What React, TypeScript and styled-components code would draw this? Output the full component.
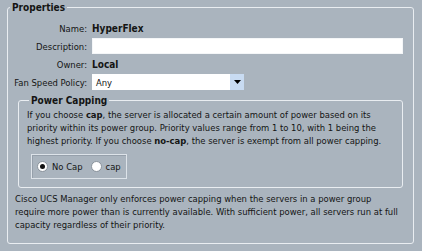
import React, { useState } from "react";
import styled, { createGlobalStyle } from "styled-components";

const GlobalStyle = createGlobalStyle`
  html, body {
    margin: 0;
    padding: 0;
    background: #aab4be;
  }
  body {
    font-family: "DejaVu Sans Condensed", "DejaVu Sans", sans-serif;
    font-size: 9.4px;
    color: #141414;
  }
`;

const Page = styled.div`
  width: 422px;
  height: 251px;
  box-sizing: border-box;
  padding: 2px 8px 0 7px;
`;

const Panel = styled.fieldset<{ $inner?: boolean }>`
  margin: ${p => (p.$inner ? "5px 10px 0 10px" : "0")};
  padding: ${p => (p.$inner ? "2px 8px 8px 8px" : "7px 0 0 0")};
  border: 1.5px solid #e9edf1;
  border-radius: 3px;
  height: ${p => (p.$inner ? "auto" : "242px")};
  box-sizing: border-box;
  min-width: 0;
`;

const Legend = styled.legend`
  font-weight: bold;
  font-size: 10px;
  padding: 0 2px;
  margin-left: 2px;
  line-height: 11px;
`;

const Form = styled.div`
  display: grid;
  grid-template-columns: 79px 1fr;
  grid-auto-rows: 16px;
  column-gap: 5px;
  row-gap: 2px;
  align-items: center;
`;

const Label = styled.span`
  text-align: right;
  white-space: nowrap;
`;

const Value = styled.span`
  font-weight: bold;
  font-size: 10px;
`;

const TextBox = styled.input`
  width: 311px;
  height: 16px;
  box-sizing: border-box;
  border: 1px solid #f4f6f8;
  background: #fff;
  padding: 0 3px;
  font: inherit;
  outline: none;
`;

const Select = styled.div`
  width: 152px;
  height: 16px;
  display: flex;
  align-items: center;
  background: #fff;
  box-sizing: border-box;
`;

const SelectText = styled.span`
  flex: 1;
  padding-left: 4px;
`;

const Arrow = styled.span`
  width: 14px;
  height: 16px;
  background: #c8dbf2;
  display: flex;
  align-items: center;
  justify-content: center;
`;

const Para = styled.p`
  margin: 0;
  line-height: 13px;
  white-space: pre-line;
`;

const RadioBox = styled.div`
  display: inline-flex;
  align-items: center;
  gap: 8px;
  margin: 7px 0 0 4px;
  padding: 4px 5px;
  height: 25px;
  box-sizing: border-box;
  border: 1px solid #dde3e9;
  box-shadow: inset 1px 1px 0 #96a0ab;
`;

const RadioLabel = styled.label`
  display: flex;
  align-items: center;
  gap: 4px;
  cursor: pointer;
`;

const Dot = styled.span<{ $on: boolean }>`
  width: 11px;
  height: 11px;
  border-radius: 50%;
  background: #fff;
  border: 1px solid #8a939c;
  box-sizing: border-box;
  display: flex;
  align-items: center;
  justify-content: center;
  &::after {
    content: "";
    width: 5px;
    height: 5px;
    border-radius: 50%;
    background: ${p => (p.$on ? "#111" : "transparent")};
  }
`;

const Footer = styled(Para)`
  margin-top: 4px;
  padding-left: 7px;
`;

export default function App() {
  const [choice, setChoice] = useState("nocap");
  return (
    <Page>
      <GlobalStyle />
      <Panel>
        <Legend>Properties</Legend>
        <Form>
          <Label>Name:</Label>
          <Value>HyperFlex</Value>
          <Label>Description:</Label>
          <TextBox defaultValue="" />
          <Label>Owner:</Label>
          <Value>Local</Value>
          <Label>Fan Speed Policy:</Label>
          <Select>
            <SelectText>Any</SelectText>
            <Arrow>
              <svg width="7" height="4" viewBox="0 0 7 4">
                <path d="M0 0h7L3.5 4z" fill="#000" />
              </svg>
            </Arrow>
          </Select>
        </Form>
        <Panel $inner>
          <Legend>Power Capping</Legend>
          <Para>
            If you choose <b>cap</b>, the server is allocated a certain amount of power based on its{"\n"}
            priority within its power group. Priority values range from 1 to 10, with 1 being the{"\n"}
            highest priority. If you choose <b>no-cap</b>, the server is exempt from all power capping.
          </Para>
          <RadioBox>
            <RadioLabel onClick={() => setChoice("nocap")}>
              <Dot $on={choice === "nocap"} />
              No Cap
            </RadioLabel>
            <RadioLabel onClick={() => setChoice("cap")}>
              <Dot $on={choice === "cap"} />
              cap
            </RadioLabel>
          </RadioBox>
        </Panel>
        <Footer>
          Cisco UCS Manager only enforces power capping when the servers in a power group{"\n"}
          require more power than is currently available. With sufficient power, all servers run at full{"\n"}
          capacity regardless of their priority.
        </Footer>
      </Panel>
    </Page>
  );
}
